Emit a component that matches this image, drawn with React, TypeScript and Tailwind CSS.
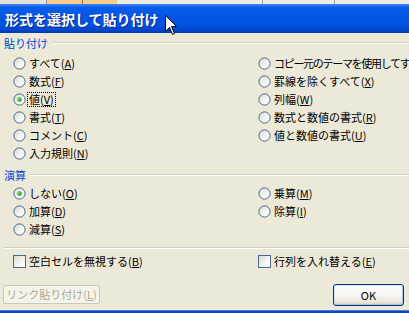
import React from "react";

const FONT = "font-['Noto_Sans_CJK_JP','Noto_Sans',sans-serif]";

function Radio({ checked }: { checked?: boolean }) {
  return (
    <svg width="13" height="13" viewBox="0 0 13 13" className="shrink-0">
      <defs>
        <linearGradient id="rg" x1="0" y1="0" x2="1" y2="1">
          <stop offset="0" stopColor="#D8D8D2" />
          <stop offset="0.6" stopColor="#F6F6F3" />
          <stop offset="1" stopColor="#FFFFFF" />
        </linearGradient>
        <radialGradient id="dot" cx="0.4" cy="0.4" r="0.6">
          <stop offset="0" stopColor="#8EE58A" />
          <stop offset="0.6" stopColor="#2FB02C" />
          <stop offset="1" stopColor="#1E8F1C" />
        </radialGradient>
      </defs>
      <circle cx="6.5" cy="6.5" r="5.6" fill="url(#rg)" stroke="#46698E" strokeWidth="1" />
      {checked && <circle cx="6.5" cy="6.5" r="2.2" fill="url(#dot)" />}
    </svg>
  );
}

function Check() {
  return (
    <svg width="13" height="13" viewBox="0 0 13 13" className="shrink-0">
      <defs>
        <linearGradient id="cg" x1="0" y1="0" x2="1" y2="1">
          <stop offset="0" stopColor="#D8D8D2" />
          <stop offset="0.6" stopColor="#F6F6F3" />
          <stop offset="1" stopColor="#FFFFFF" />
        </linearGradient>
      </defs>
      <rect x="0.5" y="0.5" width="12" height="12" fill="url(#cg)" stroke="#46698E" strokeWidth="1" />
    </svg>
  );
}

function Label({ text, k, focus }: { text: string; k: string; focus?: boolean }) {
  return (
    <span
      className={`ml-[1px] px-[1px] leading-[13px] whitespace-nowrap border border-dotted ${
        focus ? "border-black" : "border-transparent"
      }`}
    >
      {text}(<span className="underline underline-offset-[1px]">{k}</span>)
    </span>
  );
}

function RadioRow({ text, k, checked, focus }: { text: string; k: string; checked?: boolean; focus?: boolean }) {
  return (
    <div className="flex items-center h-[18px]">
      <Radio checked={checked} />
      <Label text={text} k={k} focus={focus} />
    </div>
  );
}

function GroupTitle({ text }: { text: string }) {
  return (
    <div className="flex items-center h-[14px] pl-[4px]">
      <span className="text-[#0046D5] leading-[14px] whitespace-nowrap">{text}</span>
      <div className="flex-1 ml-[4px] flex flex-col">
        <div className="h-px bg-[#D0D0BF]" />
        <div className="h-px bg-[#FFFFFF]" />
      </div>
    </div>
  );
}

export default function App() {
  return (
    <div className={`relative w-[409px] h-[313px] overflow-hidden bg-[#ECE9D8] flex flex-col text-[11px] text-black ${FONT}`}>
      {/* spreadsheet header strip */}
      <div className="h-[4px] flex shrink-0">
        <div className="w-[47px] bg-[#E3E1D6] border-r border-[#9C9A8E]" />
        <div className="w-[36px] bg-[#F7CD8E] border-r border-[#8E7B5A]" />
        <div className="w-[34px] bg-[#F7CD8E]" />
        <div className="w-[146px] bg-[#EEECE2] border-r border-[#A5A397]" />
        <div className="w-[72px] bg-[#EEECE2] border-r border-[#A5A397]" />
        <div className="flex-1 bg-[#EEECE2]" />
      </div>

      {/* title bar */}
      <div className="h-[29px] shrink-0 flex items-center pl-[5px] bg-[linear-gradient(to_bottom,#3D86F0_0%,#0A5DEB_12%,#0055E5_45%,#0152E0_75%,#0046CC_90%,#003AB0_100%)]">
        <span className="text-white font-bold text-[14px] leading-[16px] [text-shadow:1px_1px_0_#0B2A8E] whitespace-nowrap">
          形式を選択して貼り付け
        </span>
      </div>

      {/* body */}
      <div className="flex-1 flex flex-col pt-[3px]">
        <GroupTitle text="貼り付け" />
        <div className="mt-[4px] grid grid-cols-[245px_1fr] pl-[13px]">
          <div className="flex flex-col">
            <RadioRow text="すべて" k="A" />
            <RadioRow text="数式" k="F" />
            <RadioRow text="値" k="V" checked focus />
            <RadioRow text="書式" k="T" />
            <RadioRow text="コメント" k="C" />
            <RadioRow text="入力規則" k="N" />
          </div>
          <div className="flex flex-col overflow-hidden">
            <div className="flex items-center h-[18px]">
              <Radio />
              <span className="ml-[1px] px-[1px] border border-transparent leading-[13px] whitespace-nowrap tracking-[-1.3px]">
                コピー元のテーマを使用してすべて(H)
              </span>
            </div>
            <RadioRow text="罫線を除くすべて" k="X" />
            <RadioRow text="列幅" k="W" />
            <RadioRow text="数式と数値の書式" k="R" />
            <RadioRow text="値と数値の書式" k="U" />
          </div>
        </div>

        <div className="mt-[6px]">
          <GroupTitle text="演算" />
        </div>
        <div className="mt-[2px] grid grid-cols-[245px_1fr] pl-[13px]">
          <div className="flex flex-col">
            <RadioRow text="しない" k="O" checked />
            <RadioRow text="加算" k="D" />
            <RadioRow text="減算" k="S" />
          </div>
          <div className="flex flex-col">
            <RadioRow text="乗算" k="M" />
            <RadioRow text="除算" k="I" />
          </div>
        </div>

        <div className="mt-[9px] ml-[4px] flex flex-col">
          <div className="h-px bg-[#D0D0BF]" />
          <div className="h-px bg-[#FFFFFF]" />
        </div>

        <div className="mt-[3px] grid grid-cols-[245px_1fr] pl-[13px]">
          <div className="flex items-center h-[18px]">
            <Check />
            <Label text="空白セルを無視する" k="B" />
          </div>
          <div className="flex items-center h-[18px]">
            <Check />
            <Label text="行列を入れ替える" k="E" />
          </div>
        </div>

        <div className="mt-[14px] flex items-start pl-[3px] pr-[5px]">
          <div className="mt-[1px] h-[19px] w-[97px] flex items-center justify-center rounded-[2px] border border-[#C9C7BA] bg-[#F5F4EA] text-[#ACA899] whitespace-nowrap">
            リンク貼り付け(<span className="underline underline-offset-[1px]">L</span>)
          </div>
          <div className="flex-1" />
          <div className="h-[22px] w-[71px] flex items-center justify-center rounded-[3px] border border-[#003C74] bg-[linear-gradient(to_bottom,#FFFFFF_0%,#F7F6F2_50%,#E8E6DC_85%,#D6D0C5_100%)] shadow-[inset_-1px_-1px_0_#A9BFE9,inset_1px_1px_0_#CEE7FF] text-black">
            OK
          </div>
        </div>
      </div>

      {/* bottom frame */}
      <div className="h-[3px] shrink-0 bg-[#0A46C6] border-t border-[#4A7BDA]" />

      {/* mouse cursor */}
      <svg className="absolute left-[165px] top-[15px]" width="13" height="21" viewBox="0 0 13 21">
        <path d="M0.5 0.5 L0.5 16.5 L4.5 12.5 L7.5 19.5 L9.5 18.5 L6.5 11.5 L11.5 11.5 Z" fill="#FFFFFF" stroke="#000000" strokeWidth="1" strokeLinejoin="miter" />
      </svg>
    </div>
  );
}
